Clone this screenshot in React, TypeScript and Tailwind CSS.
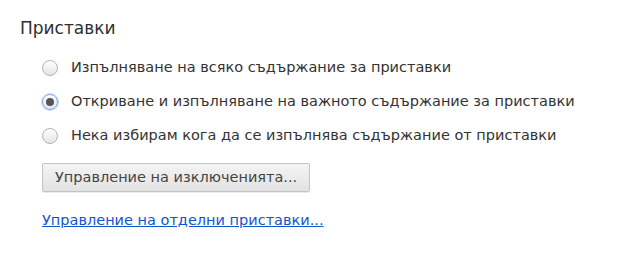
import React, { useState } from 'react'

const options = [
  'Изпълняване на всяко съдържание за приставки',
  'Откриване и изпълняване на важното съдържание за приставки',
  'Нека избирам кога да се изпълнява съдържание от приставки',
]

function Radio({ checked }: { checked: boolean }) {
  return (
    <span
      className={`flex h-[16px] w-[16px] shrink-0 items-center justify-center rounded-full border bg-gradient-to-b from-[#ffffff] to-[#e4e4e4] ${
        checked ? 'border-[#7fa7e6] shadow-[0_0_0_1px_#c6d8f5]' : 'border-[#b4b4b4]'
      }`}
    >
      {checked && <span className="h-[8px] w-[8px] rounded-full bg-[#555]" />}
    </span>
  )
}

export default function App() {
  const [selected, setSelected] = useState(1)

  return (
    <div className="h-[253px] w-[620px] bg-white pl-[20px] pt-[17px] font-['DejaVu_Sans',sans-serif] text-[#303030]">
      <h2 className="text-[17px] leading-[22px]">Приставки</h2>

      <div className="mt-[20px] flex flex-col gap-[17px] pl-[22px]">
        {options.map((label, i) => (
          <label
            key={i}
            className="flex cursor-pointer items-center gap-[13px] text-[14.5px] leading-[17px] text-[#333]"
            onClick={() => setSelected(i)}
          >
            <Radio checked={selected === i} />
            <span>{label}</span>
          </label>
        ))}
      </div>

      <div className="mt-[19px] pl-[22px]">
        <button className="h-[29px] w-[268px] rounded-[2px] border border-[#c4c4c4] bg-gradient-to-b from-[#f4f4f4] to-[#e2e2e2] pl-[12px] text-left text-[14.5px] text-[#444] shadow-[0_1px_0_rgba(0,0,0,0.08)]">
          Управление на изключенията...
        </button>
      </div>

      <div className="mt-[16px] pl-[22px]">
        <a href="#" className="text-[14.5px] leading-[17px] text-[#1155cc] underline">
          Управление на отделни приставки...
        </a>
      </div>
    </div>
  )
}
